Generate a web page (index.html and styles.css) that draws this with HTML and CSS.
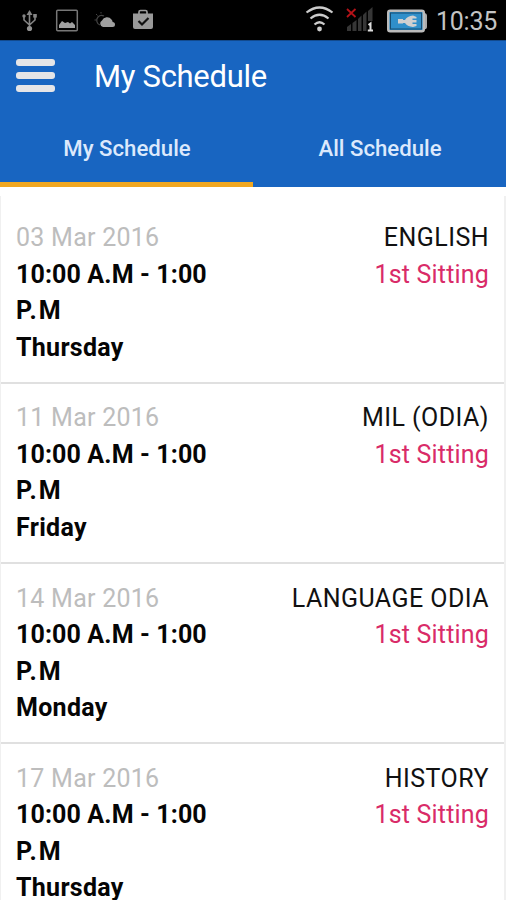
FILE: index.html
```html
<!DOCTYPE html>
<html lang="en">
<head>
<meta charset="utf-8">
<title>My Schedule</title>
<link rel="stylesheet" href="styles.css">
</head>
<body>
<div class="status">
  <svg class="status-icons" width="170" height="40" viewBox="0 0 170 40" fill="none" stroke="#858585">
    <path d="M29.500 14V28M24 16V20L29.500 25L35 20V17" stroke-width="1.600"/>
    <path d="M29.500 10L32.500 15H26.500Z" fill="#858585" stroke="none"/>
    <circle cx="29.500" cy="28.500" r="2.600" fill="#929292" stroke="none"/>
    <circle cx="24" cy="16" r="1.700" fill="#858585" stroke="none"/>
    <path d="M33.200 14H36.800V17.600H33.200Z" fill="#858585" stroke="none"/>
    <rect x="56.700" y="10.200" width="20.600" height="20.600" rx="1" stroke="#777" stroke-width="1.500"/>
    <path d="M59 28V25L62 21L65 23L68 22L70 23.500L72 22L75 25V28Z" fill="#a0a0a0" stroke="none"/>
    <path d="M100 25A5 5 0 0 1 98 17A5 5 0 0 1 104 16" stroke="#444" stroke-width="1.200"/>
    <path d="M96 14L97.500 15.500M101 12V13.500M94.500 20H96.500" stroke="#444"/>
    <path d="M103 27A3.500 3.500 0 0 1 102 20.500A5.500 5.500 0 0 1 111.500 19.500Q113 21 112.500 22A2.500 2.500 0 0 1 112.500 27Z" fill="#a0a0a0" stroke="none"/>
    <path d="M139 14V12Q139 10.500 140.500 10.500H145.500Q147 10.500 147 12V14" stroke="#999" stroke-width="1.700"/>
    <path d="M133 13.500H153V27Q153 29 151 29H135Q133 29 133 27Z" fill="#999" stroke="none"/>
    <path d="M138.500 21L142 24.500L148.500 18" stroke="#111" stroke-width="2.200"/>
  </svg>
  <svg class="status-icons" width="134" height="40" viewBox="300 0 134 40" fill="none">
    <g stroke="#ccc" stroke-width="2.200">
      <path d="M306.500 12.500Q319.500 2.500 332.500 12.500"/>
      <path d="M310.500 18.500Q319.500 11 328.500 18.500"/>
      <path d="M314.500 24.500Q319.500 20 324.500 24.500"/>
    </g>
    <circle cx="319.500" cy="29" r="2.400" fill="#ccc"/>
    <path d="M347 9L355.500 17M355.500 9L347 17" stroke="#b51218" stroke-width="1.800"/>
    <g fill="#363636">
      <path d="M347 27L351 24V31H347Z"/><path d="M352.500 23L356.500 20V31H352.500Z"/>
      <path d="M358 19L361.500 15.500V31H358Z"/><path d="M363 15L366.500 11.500V31H363Z"/><path d="M368 11L372.500 7V21H368Z"/>
    </g>
    <path d="M368.500 25L370.500 23.500V30.500M367.800 30.500H373" stroke="#ddd" stroke-width="2"/>
    <path d="M423 13H424Q427 13 427 16V27Q427 29.500 423 29.500Z" fill="#aaa"/>
    <rect x="388.200" y="10.700" width="35.600" height="20.600" rx="2" fill="#2f8fca" stroke="#bbb" stroke-width="2.400"/>
    <rect x="390.500" y="13" width="31" height="16" stroke="#174c70"/>
    <path d="M398 19H403V20H405Q407 16 413 15.500L416.500 17V18.500H412.500V20H416.500V22.500H412.500V24H416.500V26L413 27Q407 26.500 405 23H403V23.500H398Z" fill="#d0d0d0"/>
  </svg>
  <span class="clock">10:35</span>
</div>
<header class="header">
  <div class="toolbar">
    <div class="menu"><i></i><i></i><i></i></div>
    <h1 class="title">My Schedule</h1>
  </div>
  <nav class="tabs">
    <span class="tab active">My Schedule</span>
    <span class="tab">All Schedule</span>
  </nav>
</header>
<main class="list">
  <section class="row">
    <div class="when"><span class="date">03 Mar 2016</span><b>10:00 A.M - 1:00<br><span class="meridiem">P.M</span></b><b class="day">Thursday</b></div>
    <div class="what"><span class="subject">ENGLISH</span><span class="sitting">1st Sitting</span></div>
  </section>
  <section class="row">
    <div class="when"><span class="date">11 Mar 2016</span><b>10:00 A.M - 1:00<br><span class="meridiem">P.M</span></b><b class="day">Friday</b></div>
    <div class="what"><span class="subject">MIL (ODIA)</span><span class="sitting">1st Sitting</span></div>
  </section>
  <section class="row">
    <div class="when"><span class="date">14 Mar 2016</span><b>10:00 A.M - 1:00<br><span class="meridiem">P.M</span></b><b class="day">Monday</b></div>
    <div class="what"><span class="subject">LANGUAGE ODIA</span><span class="sitting">1st Sitting</span></div>
  </section>
  <section class="row">
    <div class="when"><span class="date">17 Mar 2016</span><b>10:00 A.M - 1:00<br><span class="meridiem">P.M</span></b><b class="day">Thursday</b></div>
    <div class="what"><span class="subject">HISTORY</span><span class="sitting">1st Sitting</span></div>
  </section>
</main>
</body>
</html>
```
FILE: styles.css
```css
* { box-sizing: border-box; }
body {
  margin: 0;
  height: 900px;
  overflow: hidden;
  display: flex;
  flex-direction: column;
  background: #fff;
  font-family: Roboto, "Liberation Sans", sans-serif;
}
.status {
  flex: none;
  display: flex;
  align-items: center;
  height: 40px;
  background: #000;
}
.status-icons { flex: none; display: block; }
.status-icons + .status-icons { margin-left: 130px; }
.clock {
  margin-left: 2px;
  padding-top: 4px;
  color: #c4c4c4;
  font-size: 25px;
  letter-spacing: -0.250px;
  line-height: 30px;
  white-space: nowrap;
}
.header {
  flex: none;
  height: 147px;
  background: #1865c1;
  border-top: 1px solid #124a8e;
  color: #fff;
}
.toolbar {
  display: flex;
  align-items: center;
  height: 70px;
  padding-left: 16px;
}
.menu { display: grid; gap: 6px; width: 39px; margin-top: -1px; }
.menu i { height: 7px; border-radius: 3px; background: #e5e5e7; }
.title {
  margin: 2px 0 0 39px;
  font-size: 31px;
  font-weight: 400;
  letter-spacing: -0.300px;
  line-height: 40px;
}
.tabs { display: grid; grid-template-columns: 253px 253px; height: 76px; }
.tab {
  padding: 22px 0 0 1px;
  border-bottom: 5px solid transparent;
  color: #dce9fc;
  text-align: center;
  font-size: 22.200px;
  font-weight: 500;
  line-height: 30px;
}
.active { border-color: #f0a720; }
.list {
  flex: none;
  margin-top: 9px;
  padding-top: 7.600px;
  border: solid #f0f0f0;
  border-width: 0 2px 0 1px;
}
.row {
  display: flex;
  justify-content: space-between;
  height: 180.250px;
  padding: 16.500px 15px 0;
  border-bottom: 2px solid #e0e0e0;
  font-size: 25px;
  line-height: 36.500px;
}
.when, .what { display: flex; flex-direction: column; white-space: nowrap; }
.what { align-items: flex-end; }
.date { color: #bdbdbd; letter-spacing: 0.250px; }
.when b { color: #050505; font-weight: 700; letter-spacing: 0.120px; }
.when .day { letter-spacing: 0.300px; }
.when .meridiem { letter-spacing: 2px; }
.subject { color: #111; letter-spacing: 0.450px; }
.sitting { color: #d92b68; letter-spacing: 0.180px; }
```
